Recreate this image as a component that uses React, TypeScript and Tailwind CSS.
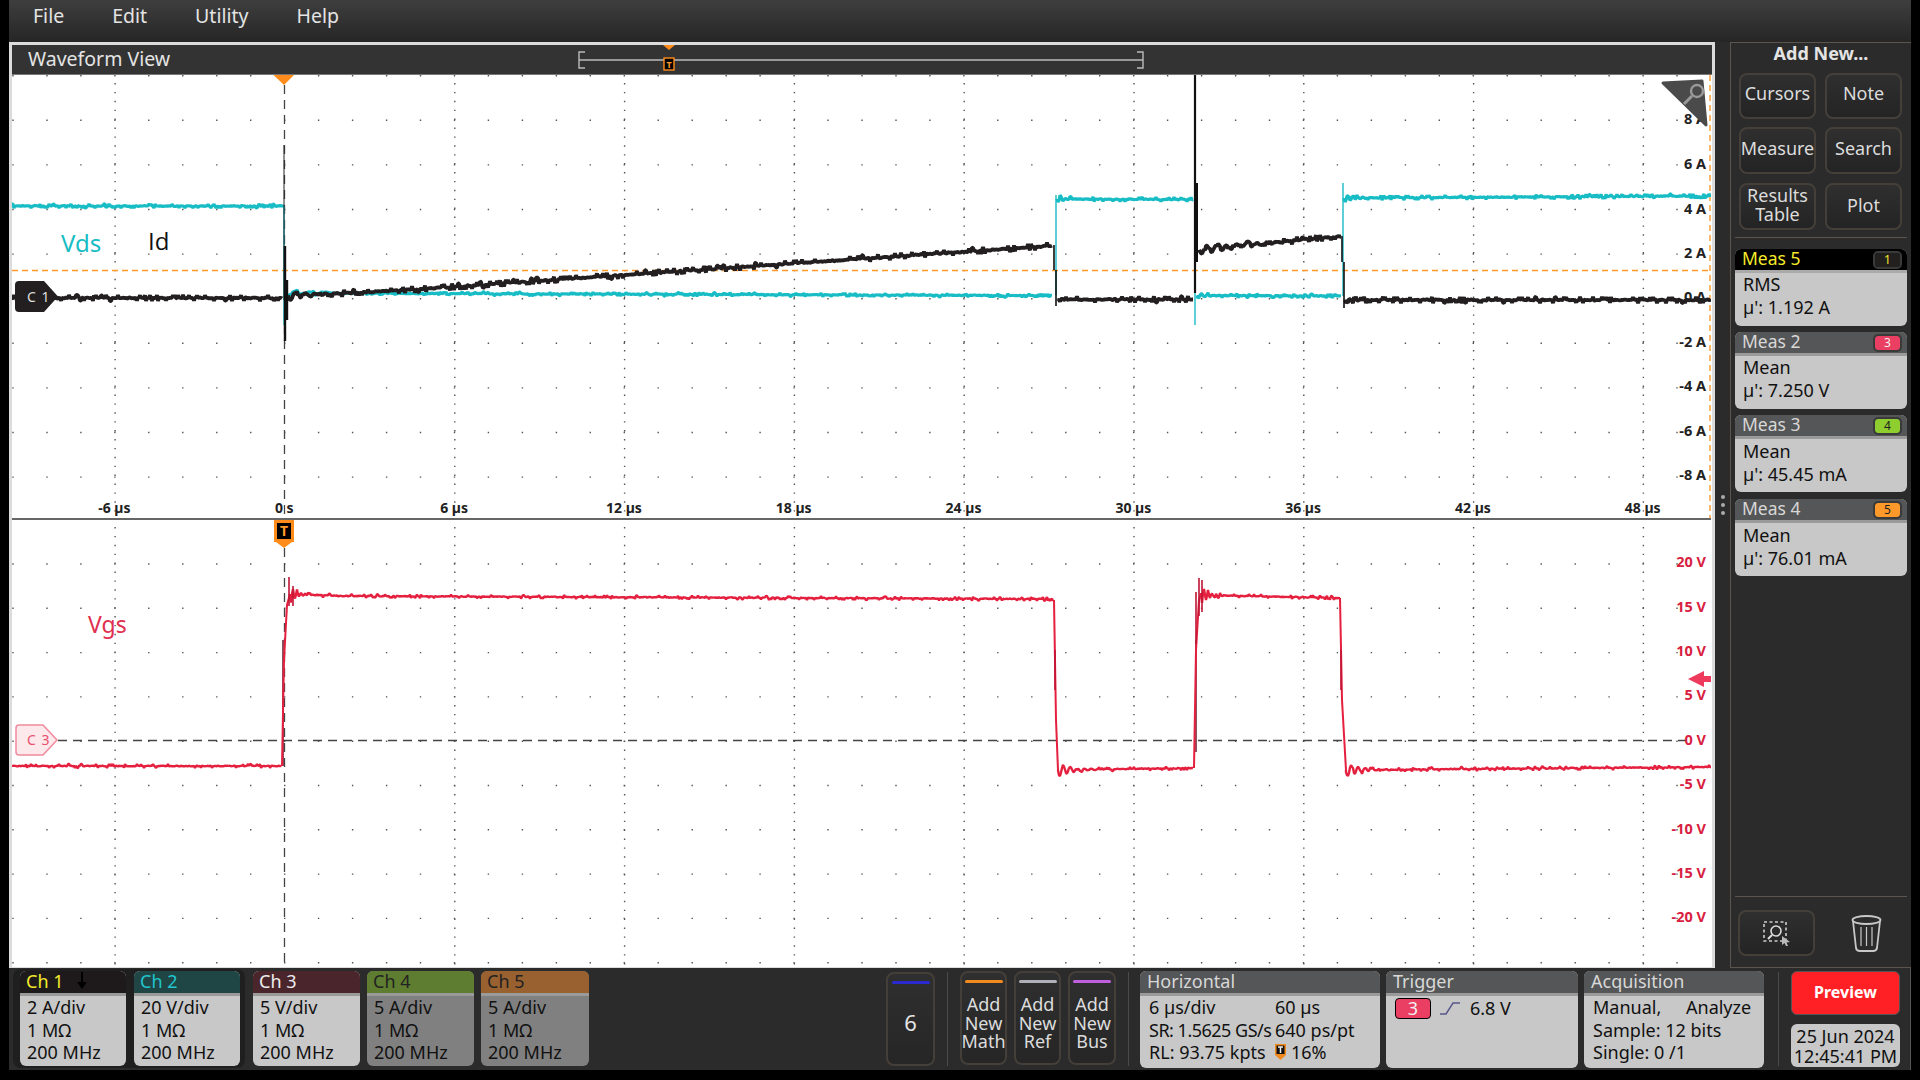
import React from "react";

const FONT = "[font-family:'Noto_Sans','Open_Sans',sans-serif]";

function rng(seed: number) {
  let a = seed;
  return () => {
    a |= 0;
    a = (a + 0x6d2b79f5) | 0;
    let t = Math.imul(a ^ (a >>> 15), 1 | a);
    t = (t + Math.imul(t ^ (t >>> 7), 61 | t)) ^ t;
    return ((t ^ (t >>> 14)) >>> 0) / 4294967296;
  };
}

type Ring = { a: number; tau: number; per: number };
function seg(r: () => number, x0: number, y0: number, x1: number, y1: number, amp: number, ring?: Ring) {
  let d = `M${x0} ${y0}`;
  for (let x = x0; x <= x1; x += 1) {
    const f = (x - x0) / (x1 - x0);
    const n = r();
    let y = y0 + (y1 - y0) * f + (n - 0.5) * amp * (n > 0.9 || n < 0.1 ? 1.4 : 0.35);
    if (ring) y += ring.a * Math.exp(-(x - x0) / ring.tau) * Math.sin(((x - x0) / ring.per) * 2 * Math.PI);
    d += `L${x.toFixed(1)} ${y.toFixed(1)}`;
  }
  return d;
}

const MAJOR_X = [114.4, 284.3, 454.1, 623.9, 793.7, 963.5, 1133.3, 1303.1, 1472.9, 1642.7];

function dots(rows: number[], top: number, bottom: number) {
  let d = "";
  for (const y of rows) for (let x = 12.3; x < 1710; x += 33.96) d += `M${x.toFixed(1)} ${y.toFixed(1)}h1.4v1.4h-1.4z`;
  for (const x of MAJOR_X) {
    if (x === 284.3) continue;
    for (let y = top; y < bottom; y += 8.9) d += `M${x.toFixed(1)} ${y.toFixed(1)}h1.4v1.4h-1.4z`;
  }
  return d;
}

const UP_ROWS = [75, 119.6, 164.2, 208.8, 253.4, 298, 342.6, 387.2, 431.8, 476.4];
const LOW_ROWS = [563.3, 607.6, 651.9, 696.2, 740.5, 784.8, 829.1, 873.4, 917.7, 962];

function UpperPlot() {
  const r = rng(7);
  const teal =
    seg(r, 12, 206, 284, 206, 3) +
    seg(r, 285, 293, 1052, 295.6, 2.6, { a: 4, tau: 16, per: 14 }) +
    seg(r, 1057, 199, 1193, 199.6, 3.4, { a: 4, tau: 6, per: 5 }) +
    seg(r, 1197, 295.5, 1341, 296, 3, { a: 3, tau: 8, per: 6 }) +
    seg(r, 1344, 198, 1711, 196, 3.4, { a: 5, tau: 7, per: 5 });
  const black =
    seg(r, 12, 298, 282, 298, 4.4) +
    seg(r, 288, 296, 400, 290.4, 4.4, { a: 4, tau: 25, per: 10 }) +
    seg(r, 400, 290.4, 1052, 245.7, 5) +
    seg(r, 1058, 299.5, 1193, 299.4, 4.6, { a: 5, tau: 3, per: 6 }) +
    seg(r, 1199, 250, 1341, 236, 4.6, { a: 4, tau: 50, per: 10 }) +
    seg(r, 1345, 300, 1711, 300, 4.6, { a: 5, tau: 4, per: 6 });
  return (
    <svg viewBox="12 75 1699 445" className="block w-[1699px] h-[445px] bg-white" fontFamily="'Noto Sans', sans-serif">
      <path d={dots(UP_ROWS, 83, 518)} fill="#555" />
      <line x1="284.5" y1="85" x2="284.5" y2="518" stroke="#444" strokeWidth="1.3" strokeDasharray="9 6" />
      <line x1="12" y1="270.5" x2="1708" y2="270.5" stroke="#ff9a2a" strokeWidth="1.4" strokeDasharray="6 4" />
      <line x1="1710" y1="75" x2="1710" y2="518" stroke="#ff9a2a" strokeWidth="1.4" strokeDasharray="6 4" />
      <path d={teal} fill="none" stroke="#17bcc4" strokeWidth="3.2" strokeLinejoin="bevel" />
      <path d="M284 206V325M1056 295V195M1195 200V325M1343 296V183" fill="none" stroke="#17bcc4" strokeWidth="1.4" />
      <path d={black} fill="none" stroke="#231f20" strokeWidth="3.8" strokeLinejoin="bevel" />
      <path d="M284 145V300" stroke="#231f20" strokeWidth="1" />
      <path d="M285 246V341M287 280V320" stroke="#111" strokeWidth="2.4" />
      <path d="M1054 245V270M1056 270V306" stroke="#111" strokeWidth="1.6" />
      <path d="M1195 75V293" stroke="#111" strokeWidth="2.2" />
      <path d="M1197 183V262" stroke="#111" strokeWidth="2" />
      <path d="M1342 236V262M1344 262V308" stroke="#111" strokeWidth="1.6" />
      <polygon points="273.5,75 294,75 284,85" fill="#ff8c1a" />
      <text x="61" y="252" fontSize="24" fill="#17bcc4">Vds</text>
      <text x="148" y="250" fontSize="24" fill="#111" fontFamily="'Open Sans', sans-serif">Id</text>
      {[["8 A", 124], ["6 A", 169], ["4 A", 214], ["2 A", 258], ["0 A", 302], ["-2 A", 347], ["-4 A", 391], ["-6 A", 436], ["-8 A", 480]].map(([t, y]) => (
        <text key={t as string} x="1706" y={y as number} fontSize="14.5" fontWeight="700" fill="#222" textAnchor="end">{t}</text>
      ))}
      {["-6 µs", "0 s", "6 µs", "12 µs", "18 µs", "24 µs", "30 µs", "36 µs", "42 µs", "48 µs"].map((t, i) => (
        <text key={t} x={MAJOR_X[i]} y="513" fontSize="14" fontWeight="700" fill="#222" textAnchor="middle">{t}</text>
      ))}
      <polygon points="1663,83 1702,81 1706,125" fill="#4a4a4a" stroke="#4a4a4a" strokeWidth="3" strokeLinejoin="round" />
      <circle cx="1697" cy="91" r="6" fill="none" stroke="#999" strokeWidth="2.4" />
      <line x1="1692" y1="96" x2="1684" y2="104" stroke="#999" strokeWidth="3" />
      <rect x="12" y="518" width="1699" height="2" fill="#666" />
    </svg>
  );
}

function LowerPlot() {
  const r = rng(21);
  const red =
    seg(r, 12, 766, 281, 766, 3) +
    seg(r, 290, 594, 340, 596, 3, { a: 8, tau: 7, per: 4 }) +
    seg(r, 340, 596, 1053, 599, 2.8) +
    seg(r, 1058, 770, 1193, 768, 3, { a: 7, tau: 14, per: 7 }) +
    seg(r, 1201, 595, 1340, 598, 3, { a: 9, tau: 7, per: 4 }) +
    seg(r, 1346, 770, 1711, 767, 3, { a: 7, tau: 14, per: 7 });
  return (
    <svg viewBox="12 520 1699 447" className="block w-[1699px] h-[447px] bg-white" fontFamily="'Noto Sans', sans-serif">
      <path d={dots(LOW_ROWS, 527, 967)} fill="#555" />
      <line x1="284.5" y1="548" x2="284.5" y2="967" stroke="#444" strokeWidth="1.3" strokeDasharray="9 6" />
      <line x1="58" y1="740.5" x2="1690" y2="740.5" stroke="#444" strokeWidth="1.3" strokeDasharray="9 6" />
      <path d="M283 640V766M1196 640V752" stroke="#5a0a1c" strokeWidth="1.4" />
      <path d={red} fill="none" stroke="#e5203f" strokeWidth="2.4" strokeLinejoin="bevel" />
      <path d="M282 766L284 660L287 605L290 594M1054 600L1056 720L1058 770M1194 768L1196 650L1199 600L1201 594M1340 598L1342 700L1346 770" fill="none" stroke="#e5203f" strokeWidth="2" />
      <path d="M289 577V606M293 586V606M1199 578V616M1202 580V612M1196 592V644M1055 650V690M1341 650V690" stroke="#c01535" strokeWidth="1.6" />
      <text x="88" y="633" fontSize="23" fill="#e0304f">Vgs</text>
      {[["20 V", 567], ["15 V", 612], ["10 V", 656], ["5 V", 700], ["0 V", 745], ["-5 V", 789], ["-10 V", 834], ["-15 V", 878], ["-20 V", 922]].map(([t, y]) => (
        <text key={t as string} x="1706" y={y as number} fontSize="14.5" fontWeight="700" fill="#d8203f" textAnchor="end">{t}</text>
      ))}
      <rect x="275.5" y="521.5" width="17" height="19" fill="#000" stroke="#ff8c1a" strokeWidth="3" />
      <polygon points="276,542 292,542 284,548" fill="#ff8c1a" />
      <text x="284" y="536" fontSize="14" fontWeight="700" fill="#ff9a2a" textAnchor="middle">T</text>
      <polygon points="1688,679 1704,671 1704,676 1712,676 1712,682 1704,682 1704,687" fill="#ee3a5c" />
      <path d="M19 725H43L57 740L43 755H19Q16 755 16 752V728Q16 725 19 725Z" fill="#fde8ec" stroke="#f08a9c" strokeWidth="1.5" />
      <text x="27" y="745" fontSize="14" fill="#e8506a" letterSpacing="1">C 3</text>
    </svg>
  );
}

function C1Marker() {
  return (
    <svg viewBox="15 280 44 33" className="absolute left-[3px] top-[205px] w-[44px] h-[33px]" fontFamily="'Noto Sans', sans-serif">
      <path d="M19 281H44L58 296.5L44 312H19Q15 312 15 308V285Q15 281 19 281Z" fill="#231f20" />
      <text x="27" y="302" fontSize="14" fill="#ddd" letterSpacing="1">C 1</text>
    </svg>
  );
}

function Btn({ children, className }: { children: React.ReactNode; className: string }) {
  return (
    <div className={`flex items-center justify-center text-center rounded-lg border-2 border-[#453f3a] bg-linear-to-b from-[#2f2f2f] to-[#242424] text-[#dcdcdc] ${className}`}>
      {children}
    </div>
  );
}

function Meas({ title, name, value, num, badge, numColor, first, cls, bodyPad }: { title: string; name: string; value: string; num: string; badge: string; numColor: string; first?: boolean; cls?: string; bodyPad?: string }) {
  return (
    <div className={`w-[172px] h-[77px] rounded-md bg-[#c8c8c8] flex flex-col shrink-0 ${cls ?? ""}`}>
      <div className={`h-[21px] rounded-t-md flex items-center justify-between pl-[7px] pr-[7px] shrink-0 ${first ? "bg-black text-[#f5ea2a]" : "bg-[#555657] text-[#d8d8d8]"}`}>
        <span className="text-[17.5px] leading-[19px] pb-[2px]">{title}</span>
        <span className={`w-[25px] h-[14px] rounded-[3px] flex items-center justify-center text-[12px] leading-none outline-2 outline-[#3a3a3a] ${badge} ${numColor}`}>{num}</span>
      </div>
      <div className={`h-[3px] shrink-0 ${first ? "bg-[#aaa]" : "bg-[#9a9a9a]"}`} />
      <div className={`pl-[8px] text-[18px] leading-[23px] text-[#111] ${bodyPad ?? "pt-[1px]"}`}>
        <div>{name}</div>
        <div>{value}</div>
      </div>
    </div>
  );
}

function ChCard({ label, head, labelColor, body, w, lines, ml }: { label: string; head: string; labelColor: string; body: string; w: string; lines: string[]; ml?: string }) {
  return (
    <div className={`${w} ${ml ?? ""} h-[95px] rounded-md shrink-0 flex flex-col ${body}`}>
      <div className={`h-[22px] rounded-t-md pl-[6px] pb-[2px] flex items-center gap-[13px] text-[18px] leading-[20px] shrink-0 ${head} ${labelColor}`}>
        <span>{label}</span>
        {label === "Ch 1" && (
          <svg width="12" height="20" viewBox="0 0 12 20"><path d="M6 1V12" stroke="#000" strokeWidth="2" /><polygon points="1,11 11,11 6,18" fill="#000" /></svg>
        )}
      </div>
      <div className="h-[3px] bg-[#9a9a9a] shrink-0" />
      <div className="pl-[7px] text-[18px] leading-[22.5px] text-[#111]">
        {lines.map((l) => <div key={l}>{l}</div>)}
      </div>
    </div>
  );
}

function Panel({ title, w, ml, children }: { title: string; w: string; ml: string; children: React.ReactNode }) {
  return (
    <div className={`${w} ${ml} h-[97px] rounded-md bg-[#c8c8c8] flex flex-col shrink-0`}>
      <div className="h-[22px] rounded-t-md pl-[7px] bg-[#555657] text-[#d8d8d8] text-[18px] leading-[20px] shrink-0">{title}</div>
      <div className="h-[3px] bg-[#9a9a9a] shrink-0" />
      <div className="text-[18px] leading-[22.5px] text-[#111] relative flex-1">{children}</div>
    </div>
  );
}

function AddBtn({ lines, color, w, ml }: { lines: string[]; color: string; w: string; ml: string }) {
  return (
    <div className={`${w} ${ml} h-[94px] rounded-lg border-2 border-[#453f3a] bg-linear-to-b from-[#2f2f2f] to-[#262626] flex flex-col items-center shrink-0`}>
      <div className={`mt-[7px] h-[3px] w-[38px] rounded-sm ${color}`} />
      <div className="mt-[12px] text-[18px] leading-[18.7px] text-[#dcdcdc] text-center">
        {lines.map((l) => <div key={l}>{l}</div>)}
      </div>
    </div>
  );
}

export default function App() {
  return (
    <div className={`w-[1920px] h-[1080px] bg-black pl-[9px] pr-[9px] pb-[10px] flex flex-col overflow-hidden ${FONT}`}>
      <div className="h-[42px] shrink-0 bg-linear-to-b from-[#3e3e3e] to-[#262626] flex items-center pb-[10px] text-[19.5px] leading-[26px] text-[#e4e4e4]">
        <span className="ml-[24px]">File</span>
        <span className="ml-[48px]">Edit</span>
        <span className="ml-[48px]">Utility</span>
        <span className="ml-[48px]">Help</span>
      </div>

      <div className="h-[926px] shrink-0 flex">
        <div className="w-[1706px] shrink-0 border-[3px] border-b-[1px] border-[#dcdcdc] bg-white flex flex-col">
          <div className="h-[30px] shrink-0 relative bg-[#333] border-b border-[#777] flex items-center pl-[16px] pb-[1px] text-[19.5px] leading-[26px] text-[#e4e4e4]">
            Waveform View
            <svg viewBox="0 0 580 30" className="absolute left-[565px] top-0 w-[580px] h-[30px]">
              <path d="M8 7H2V23H8M2 15H566M560 7H566V23H560" fill="none" stroke="#bbb" strokeWidth="1.4" />
              <polygon points="86,0 98,0 92,5" fill="#ff8c1a" />
              <rect x="87" y="13" width="10" height="12" fill="#000" stroke="#ff8c1a" strokeWidth="1.4" />
              <text x="92" y="23" fontSize="9" fill="#ff9a2a" textAnchor="middle" fontWeight="700">T</text>
            </svg>
          </div>
          <div className="relative">
            <UpperPlot />
            <C1Marker />
          </div>
          <LowerPlot />
        </div>

        <div className="flex-1 bg-[#2b2b2b] flex">
          <div className="w-[15px] shrink-0 flex flex-col items-center gap-[4px] pt-[453px]">
            <div className="w-[4px] h-[4px] rounded-full bg-[#aaa]" />
            <div className="w-[4px] h-[4px] rounded-full bg-[#aaa]" />
            <div className="w-[4px] h-[4px] rounded-full bg-[#aaa]" />
          </div>
          <div className="flex-1 border-l border-t border-b border-[#5c554e] flex flex-col px-[4px]">
            <div className="h-[30px] shrink-0 text-center font-bold text-[18px] leading-[20px] text-[#e4e4e4]">Add New...</div>
            <div className="px-[4px] grid grid-cols-[77px_77px] gap-x-[9px] text-[18px] leading-[24px]">
              <Btn className="h-[46px] pb-[6px]">Cursors</Btn>
              <Btn className="h-[46px] pb-[6px]">Note</Btn>
              <Btn className="h-[47px] mt-[8px] pb-[5px]">Measure</Btn>
              <Btn className="h-[47px] mt-[8px] pb-[5px]">Search</Btn>
              <Btn className="h-[47px] mt-[9px] pb-[3px]"><span className="block leading-[19px]">Results<br />Table</span></Btn>
              <Btn className="h-[47px] mt-[9px] pb-[3px]">Plot</Btn>
            </div>
            <div className="h-px bg-[#5c554e] mt-[7px] shrink-0" />
            <div className="flex flex-col gap-[6px] mt-[11px]">
              <Meas first bodyPad="pt-0" title="Meas 5" name="RMS" value="µ': 1.192 A" num="1" badge="bg-[#221f1f]" numColor="text-[#f5ea2a]" />
              <Meas bodyPad="pt-0" title="Meas 2" name="Mean" value="µ': 7.250 V" num="3" badge="bg-[#ea3f62]" numColor="text-[#f0f0f0]" />
              <Meas title="Meas 3" name="Mean" value="µ': 45.45 mA" num="4" badge="bg-[#8fce2f]" numColor="text-[#222]" />
              <Meas cls="mt-[1px]" title="Meas 4" name="Mean" value="µ': 76.01 mA" num="5" badge="bg-[#ff9a2a]" numColor="text-[#222]" />
            </div>
            <div className="flex-1" />
            <div className="h-px bg-[#5c554e] shrink-0" />
            <div className="h-[70px] shrink-0 flex items-center pl-[3px] pt-[2px]">
              <Btn className="w-[77px] h-[46px]">
                <svg width="30" height="26" viewBox="0 0 30 26" fill="none">
                  <rect x="2" y="2" width="22" height="19" stroke="#ccc" strokeWidth="1.6" strokeDasharray="3 2.5" />
                  <circle cx="14" cy="11" r="5" stroke="#ddd" strokeWidth="1.6" />
                  <line x1="10" y1="15" x2="6" y2="19" stroke="#ddd" strokeWidth="2" />
                  <path d="M20 16L28 22L24.5 22.5L26 26L24 26L22.5 23L20 25Z" fill="#bbb" />
                </svg>
              </Btn>
              <svg className="ml-[36px] mt-[1px]" width="31" height="38" viewBox="0 0 31 38" fill="none" stroke="#c8c8c8" strokeWidth="1.8">
                <ellipse cx="15.5" cy="5" rx="14" ry="4" />
                <path d="M2 6L5 33Q5.5 36 9 36H22Q25.5 36 26 33L29 6" />
                <path d="M10 12V31M15.5 12V31M21 12V31" strokeWidth="1.2" />
              </svg>
            </div>
          </div>
        </div>
      </div>

      <div className="h-[102px] shrink-0 bg-[#2b2b2b] flex items-start pt-[3px] border-r border-[#555]">
        <div className="ml-[4px] -mt-[2px] h-[99px] w-[232px] rounded-lg bg-[#1f1f1f] flex items-center gap-[8px] pl-[7px] shrink-0">
          <ChCard w="w-[106px]" label="Ch 1" head="bg-[#1e1a1c]" labelColor="text-[#f5ea2a]" body="bg-[#c8c8c8]" lines={["2 A/div", "1 MΩ", "200 MHz"]} />
          <ChCard w="w-[106px]" label="Ch 2" head="bg-[#1f4545]" labelColor="text-[#1fc4cc]" body="bg-[#c8c8c8]" lines={["20 V/div", "1 MΩ", "200 MHz"]} />
        </div>
        <ChCard ml="ml-[8px]" w="w-[107px]" label="Ch 3" head="bg-[#4a262c]" labelColor="text-[#eee]" body="bg-[#c8c8c8]" lines={["5 V/div", "1 MΩ", "200 MHz"]} />
        <ChCard ml="ml-[7px]" w="w-[107px]" label="Ch 4" head="bg-[#5f7d30]" labelColor="text-[#222]" body="bg-[#808080]" lines={["5 A/div", "1 MΩ", "200 MHz"]} />
        <ChCard ml="ml-[7px]" w="w-[108px]" label="Ch 5" head="bg-[#996030]" labelColor="text-[#222]" body="bg-[#808080]" lines={["5 A/div", "1 MΩ", "200 MHz"]} />

        <div className="ml-[297px] w-[49px] h-[94px] mt-[1px] rounded-lg border-2 border-[#453f3a] bg-linear-to-b from-[#2f2f2f] to-[#262626] flex flex-col items-center shrink-0">
          <div className="mt-[7px] h-[3px] w-[38px] rounded-sm bg-[#2a2ad0]" />
          <div className="mt-[22px] text-[22px] text-[#e4e4e4]">6</div>
        </div>
        <div className="ml-[12px] w-px h-[94px] mt-[1px] bg-[#4a4a4a] shrink-0" />
        <AddBtn ml="ml-[12px]" w="w-[47px]" color="bg-[#f08a1e]" lines={["Add", "New", "Math"]} />
        <AddBtn ml="ml-[7px]" w="w-[47px]" color="bg-[#b0b0b8]" lines={["Add", "New", "Ref"]} />
        <AddBtn ml="ml-[7px]" w="w-[48px]" color="bg-[#bf5fe0]" lines={["Add", "New", "Bus"]} />
        <div className="ml-[12px] w-px h-[94px] mt-[1px] bg-[#4a4a4a] shrink-0" />

        <Panel ml="ml-[11px]" w="w-[240px]" title="Horizontal">
          <div className="grid grid-cols-[126px_1fr] pl-[9px] whitespace-nowrap">
            <span>6 µs/div</span><span>60 µs</span>
            <span className="tracking-[-0.5px]">SR: 1.5625 GS/s</span><span>640 ps/pt</span>
            <span>RL: 93.75 kpts</span>
            <span className="flex items-center gap-[5px]">
              <svg width="11" height="16" viewBox="0 0 11 16"><path d="M0 0H11V11L5.5 16L0 11Z" fill="#f08a1e" /><rect x="1.5" y="1.5" width="8" height="8.5" fill="#111" /><path d="M3 3H8M5.5 3V9" stroke="#eee" strokeWidth="1.5" /></svg>
              16%
            </span>
          </div>
        </Panel>
        <Panel ml="ml-[6px]" w="w-[192px]" title="Trigger">
          <div className="flex items-center pl-[9px] h-[24px]">
            <span className="w-[36px] h-[21px] rounded-[4px] bg-[#ea3f62] border border-black text-[#f0f0f0] flex items-center justify-center">3</span>
            <svg className="ml-[9px]" width="20" height="14" viewBox="0 0 20 14" fill="none" stroke="#55558a" strokeWidth="1.4"><path d="M0 13H6L13 2H20" /></svg>
            <span className="ml-[10px]">6.8 V</span>
          </div>
        </Panel>
        <Panel ml="ml-[6px]" w="w-[180px]" title="Acquisition">
          <div className="pl-[9px] whitespace-nowrap">
            <div className="flex"><span className="w-[93px]">Manual,</span><span>Analyze</span></div>
            <div>Sample: 12 bits</div>
            <div>Single: 0 /1</div>
          </div>
        </Panel>
        <div className="ml-[14px] w-px h-[94px] mt-[1px] bg-[#4a4a4a] shrink-0" />
        <div className="ml-[12px] w-[109px] shrink-0 flex flex-col">
          <div className="h-[44px] rounded-md bg-[#ff2025] border border-[#555] flex items-center justify-center pb-[2px] font-bold text-[16px] text-white">Preview</div>
          <div className="mt-[9px] h-[43px] rounded-md bg-[#c8c8c8] text-[18px] leading-[20px] text-[#111] text-center flex flex-col justify-center whitespace-nowrap">
            <div>25 Jun 2024</div>
            <div>12:45:41 PM</div>
          </div>
        </div>
      </div>
    </div>
  );
}
